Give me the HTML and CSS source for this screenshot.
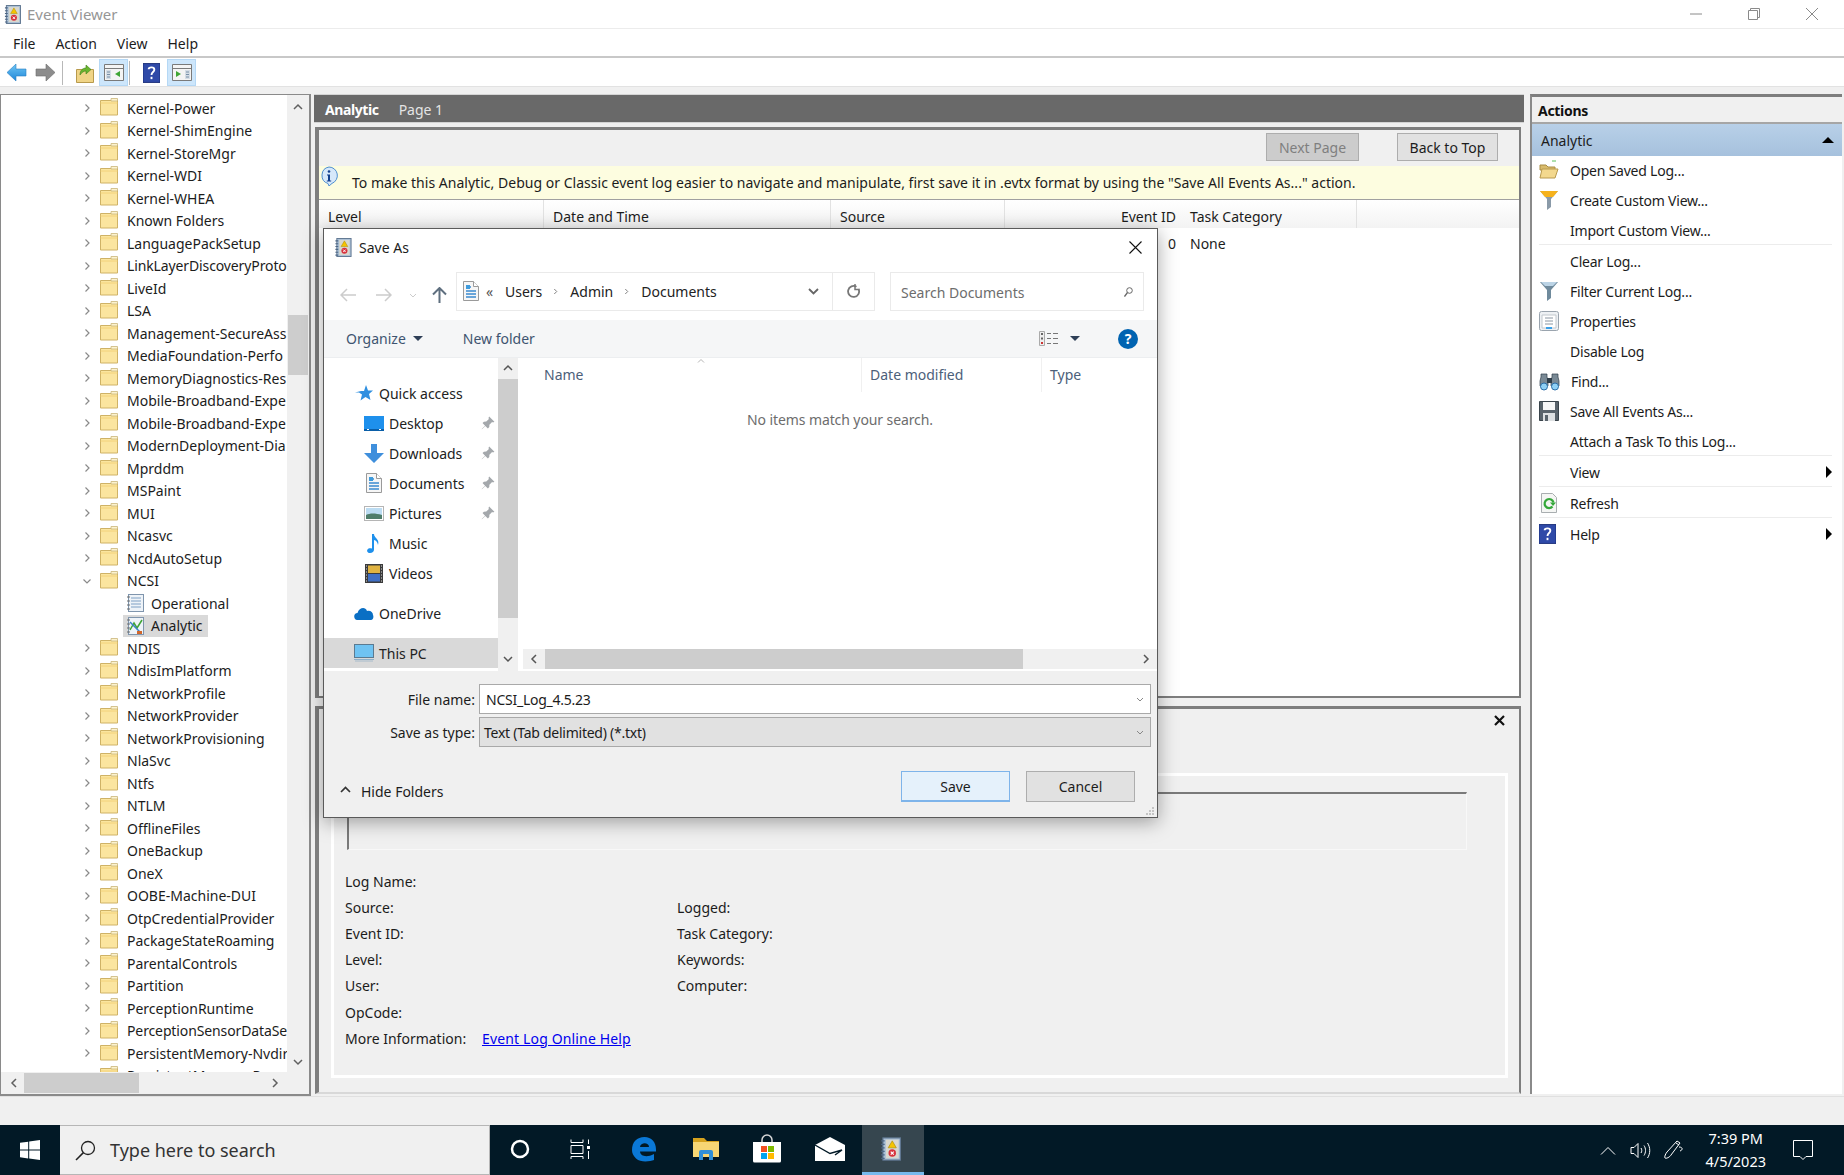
FILE: index.html
```html
<!DOCTYPE html>
<html lang="en">
<head>
    <meta charset="UTF-8">
    <title>Event Viewer</title>
    <link rel="stylesheet" href="styles.css">
</head>
<body>
<svg class="icon-defs" xmlns="http://www.w3.org/2000/svg">
    <symbol id="folder" viewBox="0 0 18 18">
        <path d="M.5 2.500h17v14.500H.5z" fill="#fbe59f" stroke="#cfb266"/>
        <path d="M.5 5h17" stroke="#f3d27a"/>
        <path d="M11 3V.5h6.500V3z" fill="#fdf3cf" stroke="#c9b57a" stroke-width=".8"/>
    </symbol>
    <symbol id="evlog" viewBox="0 0 18 20">
        <rect x="2.500" y=".5" width="15" height="19" fill="#a9bfd6" stroke="#5f7690"/>
        <rect x="5" y="2" width="11" height="16" fill="#d8d8cf"/>
        <path d="M1 3h3M1 6h3M1 9h3M1 12h3M1 15h3M1 18h3" stroke="#4d6785" stroke-width="1.200"/>
        <path d="M10.500 3l3.500 6H7z" fill="#f5c400" stroke="#a58400" stroke-width=".5"/>
        <circle cx="10.500" cy="13.500" r="3.200" fill="#d7313c"/>
        <path d="M9.200 12.200l2.600 2.600M11.800 12.200l-2.600 2.600" stroke="#fff"/>
    </symbol>
    <symbol id="doc" viewBox="0 0 16 20">
        <path d="M.5.500h10l5 5v14H.5z" fill="#f6f6f6" stroke="#9a9a9a"/>
        <path d="M10.500.500v5h5" fill="#fff" stroke="#9a9a9a"/>
        <path d="M3 6h5M3 10h10M3 13h10M3 16h10" stroke="#3b8bd0" stroke-width="1.400"/>
        <path d="M3 4h4v4H3z" fill="#3e9bdc"/>
    </symbol>
    <symbol id="pin" viewBox="0 0 12 12">
        <path d="M7 .5l4.500 4.500-1.200.6-.8-.4-2.300 2.300-.1 2L5.900 10.700 3.700 8.500.8 11.400.6 11.200 3.500 8.300 1.300 6.100 2.500 4.900l2-.1 2.300-2.300-.4-.8z" fill="#a4a8ac"/>
    </symbol>
    <symbol id="helpbook" viewBox="0 0 18 20">
        <rect width="18" height="20" fill="#2f4aa8"/>
        <path d="M0 0h18v20H0z" fill="none" stroke="#1b2e78"/>
        <path d="M6 6c0-2.500 6-3 6 .5 0 2.500-3 2.500-3 5.500" fill="none" stroke="#fff" stroke-width="2"/>
        <rect x="8" y="14" width="2" height="2.500" fill="#fff"/>
    </symbol>
    <symbol id="chev" viewBox="0 0 8 10">
        <path d="M2.500 1.500l3.500 3.500-3.500 3.500" fill="none" stroke="#8a8a8a" stroke-width="1.200"/>
    </symbol>
    <linearGradient id="arrowblue" x1="0" x2="0" y1="0" y2="1">
        <stop offset="0" stop-color="#6fc6f5"/>
        <stop offset="1" stop-color="#1e86d8"/>
    </linearGradient>
</svg>

<div class="app">
    <div class="titlebar">
        <svg class="title-icon"><use href="#evlog"/></svg>
        <span class="title-text">Event Viewer</span>
        <div class="win-buttons">
            <svg width="12" height="12" viewBox="0 0 12 12"><path d="M0 6h12" stroke="#8a8a8a"/></svg>
            <svg width="12" height="12" viewBox="0 0 12 12"><path d="M.5 2.500h9v9h-9zM2.500 2.500v-2h9v9h-2" fill="none" stroke="#8a8a8a"/></svg>
            <svg width="12" height="12" viewBox="0 0 12 12"><path d="M0 0l12 12M12 0L0 12" stroke="#8a8a8a"/></svg>
        </div>
    </div>
    <div class="menubar">
        <span>File</span>
        <span>Action</span>
        <span>View</span>
        <span>Help</span>
    </div>
    <div class="toolbar">
        <svg class="tool" width="21" height="19" viewBox="0 0 21 19"><path d="M1 9.500L10 1v5h10v7H10v5z" fill="url(#arrowblue)" stroke="#2a7fc4" stroke-width=".6"/></svg>
        <svg class="tool tool-fwd" width="21" height="19" viewBox="0 0 21 19"><path d="M20 9.500L11 1v5H1v7h10v5z" fill="#8c8c8c" stroke="#6c6c6c" stroke-width=".6"/></svg>
        <i class="tool-sep"></i>
        <svg class="tool tool-up" width="18" height="20" viewBox="0 0 18 20"><path d="M.5 6.500h17v13H.5z" fill="#f0d486" stroke="#b89a4c"/><path d="M4 12c0-5 3-7 6-7V2l5 4.500L10 11V8c-2 0-4 1-6 4z" fill="#69b52f" stroke="#3f7f17" stroke-width=".6"/></svg>
        <div class="tool-on">
            <svg width="20" height="17" viewBox="0 0 20 17"><path d="M.5.500h19v16H.5z" fill="#f4f4f4" stroke="#7a7a7a"/><path d="M.5 4.500h19" stroke="#7a7a7a"/><path d="M2 6h5v9H2z" fill="#d5dde5"/><path d="M3 8h3M3 10.500h3M3 13h3" stroke="#7890a8"/><path d="M16 7v6l-5-3z" fill="#3fa535"/></svg>
        </div>
        <i class="tool-sep tool-sep-b"></i>
        <svg class="tool tool-help" width="17" height="20"><use href="#helpbook"/></svg>
        <div class="tool-on tool-on-b">
            <svg width="20" height="17" viewBox="0 0 20 17"><path d="M.5.500h19v16H.5z" fill="#f4f4f4" stroke="#7a7a7a"/><path d="M.5 4.500h19" stroke="#7a7a7a"/><path d="M13 6h5v9h-5z" fill="#d5dde5"/><path d="M14 8h3M14 10.500h3M14 13h3" stroke="#7890a8"/><path d="M4 7v6l5-3z" fill="#3fa535"/></svg>
        </div>
    </div>

    <div class="main">
        <div class="tree-pane">
            <div class="tree-top">
                <div class="tree-list">
                    <div class="tree-row"><svg class="exp"><use href="#chev"/></svg><svg class="fold"><use href="#folder"/></svg><span>Kernel-Power</span></div>
                    <div class="tree-row"><svg class="exp"><use href="#chev"/></svg><svg class="fold"><use href="#folder"/></svg><span>Kernel-ShimEngine</span></div>
                    <div class="tree-row"><svg class="exp"><use href="#chev"/></svg><svg class="fold"><use href="#folder"/></svg><span>Kernel-StoreMgr</span></div>
                    <div class="tree-row"><svg class="exp"><use href="#chev"/></svg><svg class="fold"><use href="#folder"/></svg><span>Kernel-WDI</span></div>
                    <div class="tree-row"><svg class="exp"><use href="#chev"/></svg><svg class="fold"><use href="#folder"/></svg><span>Kernel-WHEA</span></div>
                    <div class="tree-row"><svg class="exp"><use href="#chev"/></svg><svg class="fold"><use href="#folder"/></svg><span>Known Folders</span></div>
                    <div class="tree-row"><svg class="exp"><use href="#chev"/></svg><svg class="fold"><use href="#folder"/></svg><span>LanguagePackSetup</span></div>
                    <div class="tree-row"><svg class="exp"><use href="#chev"/></svg><svg class="fold"><use href="#folder"/></svg><span class="tight">LinkLayerDiscoveryProto</span></div>
                    <div class="tree-row"><svg class="exp"><use href="#chev"/></svg><svg class="fold"><use href="#folder"/></svg><span>LiveId</span></div>
                    <div class="tree-row"><svg class="exp"><use href="#chev"/></svg><svg class="fold"><use href="#folder"/></svg><span>LSA</span></div>
                    <div class="tree-row"><svg class="exp"><use href="#chev"/></svg><svg class="fold"><use href="#folder"/></svg><span>Management-SecureAss</span></div>
                    <div class="tree-row"><svg class="exp"><use href="#chev"/></svg><svg class="fold"><use href="#folder"/></svg><span>MediaFoundation-Perfo</span></div>
                    <div class="tree-row"><svg class="exp"><use href="#chev"/></svg><svg class="fold"><use href="#folder"/></svg><span>MemoryDiagnostics-Res</span></div>
                    <div class="tree-row"><svg class="exp"><use href="#chev"/></svg><svg class="fold"><use href="#folder"/></svg><span>Mobile-Broadband-Expe</span></div>
                    <div class="tree-row"><svg class="exp"><use href="#chev"/></svg><svg class="fold"><use href="#folder"/></svg><span>Mobile-Broadband-Expe</span></div>
                    <div class="tree-row"><svg class="exp"><use href="#chev"/></svg><svg class="fold"><use href="#folder"/></svg><span>ModernDeployment-Dia</span></div>
                    <div class="tree-row"><svg class="exp"><use href="#chev"/></svg><svg class="fold"><use href="#folder"/></svg><span>Mprddm</span></div>
                    <div class="tree-row"><svg class="exp"><use href="#chev"/></svg><svg class="fold"><use href="#folder"/></svg><span>MSPaint</span></div>
                    <div class="tree-row"><svg class="exp"><use href="#chev"/></svg><svg class="fold"><use href="#folder"/></svg><span>MUI</span></div>
                    <div class="tree-row"><svg class="exp"><use href="#chev"/></svg><svg class="fold"><use href="#folder"/></svg><span>Ncasvc</span></div>
                    <div class="tree-row"><svg class="exp"><use href="#chev"/></svg><svg class="fold"><use href="#folder"/></svg><span>NcdAutoSetup</span></div>
                    <div class="tree-row"><svg class="exp open"><use href="#chev"/></svg><svg class="fold"><use href="#folder"/></svg><span>NCSI</span></div>
                    <div class="tree-row child">
                        <svg class="log-icon" viewBox="0 0 18 18"><rect x="2.500" y=".5" width="15" height="17" fill="#eef3f8" stroke="#7f95ad"/><path d="M5 4h10M5 7h10M5 10h10M5 13h10" stroke="#7fa0c4"/><path d="M1 3h3M1 7h3M1 11h3M1 15h3" stroke="#6a6a6a"/></svg>
                        <span>Operational</span>
                    </div>
                    <div class="tree-row child selected">
                        <svg class="log-icon" viewBox="0 0 18 18"><rect x="2.500" y=".5" width="15" height="17" fill="#eef3f8" stroke="#7f95ad"/><path d="M4 13l4-7 3 5 5-8" fill="none" stroke="#3fa535" stroke-width="1.500"/><path d="M4 5l10 10" stroke="#3c82c8" stroke-width="1.500"/><path d="M11 14h5v3h-5z" fill="#d2662a"/><path d="M1 3h3M1 7h3M1 11h3M1 15h3" stroke="#6a6a6a"/></svg>
                        <span>Analytic</span>
                    </div>
                    <div class="tree-row"><svg class="exp"><use href="#chev"/></svg><svg class="fold"><use href="#folder"/></svg><span>NDIS</span></div>
                    <div class="tree-row"><svg class="exp"><use href="#chev"/></svg><svg class="fold"><use href="#folder"/></svg><span>NdisImPlatform</span></div>
                    <div class="tree-row"><svg class="exp"><use href="#chev"/></svg><svg class="fold"><use href="#folder"/></svg><span>NetworkProfile</span></div>
                    <div class="tree-row"><svg class="exp"><use href="#chev"/></svg><svg class="fold"><use href="#folder"/></svg><span>NetworkProvider</span></div>
                    <div class="tree-row"><svg class="exp"><use href="#chev"/></svg><svg class="fold"><use href="#folder"/></svg><span>NetworkProvisioning</span></div>
                    <div class="tree-row"><svg class="exp"><use href="#chev"/></svg><svg class="fold"><use href="#folder"/></svg><span>NlaSvc</span></div>
                    <div class="tree-row"><svg class="exp"><use href="#chev"/></svg><svg class="fold"><use href="#folder"/></svg><span>Ntfs</span></div>
                    <div class="tree-row"><svg class="exp"><use href="#chev"/></svg><svg class="fold"><use href="#folder"/></svg><span>NTLM</span></div>
                    <div class="tree-row"><svg class="exp"><use href="#chev"/></svg><svg class="fold"><use href="#folder"/></svg><span>OfflineFiles</span></div>
                    <div class="tree-row"><svg class="exp"><use href="#chev"/></svg><svg class="fold"><use href="#folder"/></svg><span>OneBackup</span></div>
                    <div class="tree-row"><svg class="exp"><use href="#chev"/></svg><svg class="fold"><use href="#folder"/></svg><span>OneX</span></div>
                    <div class="tree-row"><svg class="exp"><use href="#chev"/></svg><svg class="fold"><use href="#folder"/></svg><span>OOBE-Machine-DUI</span></div>
                    <div class="tree-row"><svg class="exp"><use href="#chev"/></svg><svg class="fold"><use href="#folder"/></svg><span>OtpCredentialProvider</span></div>
                    <div class="tree-row"><svg class="exp"><use href="#chev"/></svg><svg class="fold"><use href="#folder"/></svg><span>PackageStateRoaming</span></div>
                    <div class="tree-row"><svg class="exp"><use href="#chev"/></svg><svg class="fold"><use href="#folder"/></svg><span>ParentalControls</span></div>
                    <div class="tree-row"><svg class="exp"><use href="#chev"/></svg><svg class="fold"><use href="#folder"/></svg><span>Partition</span></div>
                    <div class="tree-row"><svg class="exp"><use href="#chev"/></svg><svg class="fold"><use href="#folder"/></svg><span>PerceptionRuntime</span></div>
                    <div class="tree-row"><svg class="exp"><use href="#chev"/></svg><svg class="fold"><use href="#folder"/></svg><span class="tight">PerceptionSensorDataSe</span></div>
                    <div class="tree-row"><svg class="exp"><use href="#chev"/></svg><svg class="fold"><use href="#folder"/></svg><span>PersistentMemory-Nvdir</span></div>
                    <div class="tree-row"><svg class="exp"><use href="#chev"/></svg><svg class="fold"><use href="#folder"/></svg><span>PersistentMemory-P</span></div>
                </div>
                <div class="tree-vscroll">
                    <svg width="12" height="8" viewBox="0 0 12 8"><path d="M2 6l4-4 4 4" fill="none" stroke="#606060" stroke-width="1.500"/></svg>
                    <div class="tree-vthumb"></div>
                    <svg width="12" height="8" viewBox="0 0 12 8"><path d="M2 2l4 4 4-4" fill="none" stroke="#606060" stroke-width="1.500"/></svg>
                </div>
            </div>
            <div class="tree-hscroll">
                <svg width="8" height="12" viewBox="0 0 8 12"><path d="M6 2L2 6l4 4" fill="none" stroke="#606060" stroke-width="1.500"/></svg>
                <div class="tree-hthumb"></div>
                <svg width="8" height="12" viewBox="0 0 8 12"><path d="M2 2l4 4-4 4" fill="none" stroke="#606060" stroke-width="1.500"/></svg>
            </div>
        </div>

        <div class="center">
            <div class="center-head"><b>Analytic</b><span>Page 1</span></div>
            <div class="events">
                <div class="events-bar">
                    <button class="btn-disabled">Next Page</button>
                    <button class="btn-top">Back to Top</button>
                </div>
                <div class="info-bar">
                    <svg class="info-icon" width="20" height="20" viewBox="0 0 20 20"><path d="M10 1a8.500 8.500 0 0 1 3 16.400L10 20l-1-2.500A8.500 8.500 0 0 1 10 1z" fill="#d6e8fa" stroke="#4f8fd0"/><circle cx="10" cy="5.500" r="1.300" fill="#123f8c"/><path d="M8 8.500h3v6h1.200v1H7.800v-1H9V9.500H8z" fill="#123f8c"/></svg>
                    <span>To make this Analytic, Debug or Classic event log easier to navigate and manipulate, first save it in .evtx format by using the "Save All Events As..." action.</span>
                </div>
                <div class="events-table">
                    <div class="events-row events-head">
                        <span>Level</span><span>Date and Time</span><span>Source</span><span class="num">Event ID</span><span>Task Category</span>
                    </div>
                    <div class="events-row">
                        <span></span><span></span><span></span><span class="num">0</span><span>None</span>
                    </div>
                </div>
            </div>
            <div class="details">
                <div class="details-bar">
                    <svg width="11" height="11" viewBox="0 0 11 11"><path d="M1 1l9 9M10 1l-9 9" stroke="#111" stroke-width="2.200"/></svg>
                </div>
                <div class="details-tab">
                    <div class="message-box"></div>
                    <div class="fields">
                        <span>Log Name:</span><span></span><span></span><span></span>
                        <span>Source:</span><span></span><span>Logged:</span><span></span>
                        <span>Event ID:</span><span></span><span>Task Category:</span><span></span>
                        <span>Level:</span><span></span><span>Keywords:</span><span></span>
                        <span>User:</span><span></span><span>Computer:</span><span></span>
                        <span>OpCode:</span><span></span><span></span><span></span>
                        <span>More Information:</span><a href="#" class="more-link">Event Log Online Help</a><span></span><span></span>
                    </div>
                </div>
            </div>
        </div>

        <div class="actions">
            <div class="actions-head">Actions</div>
            <div class="actions-group"><span>Analytic</span><i class="tri-up"></i></div>
            <div class="actions-list">
                <div class="action">
                    <svg width="20" height="20" viewBox="0 0 20 20"><path d="M13 1h4" stroke="#5bc05b"/><path d="M1 5h6l2 2h7v3H1z" fill="#d9bb6b" stroke="#a98c45"/><path d="M1 18l2-9h16l-3 9z" fill="#f3d88e" stroke="#b99a4e"/></svg>
                    <span>Open Saved Log...</span>
                </div>
                <div class="action">
                    <svg width="20" height="20" viewBox="0 0 20 20"><path d="M1 1h18l-7 8v8l-4 3V9z" fill="#8a9aa8"/><path d="M1 1h18l-5 6H6z" fill="#f6b21c"/></svg>
                    <span>Create Custom View...</span>
                </div>
                <div class="action"><i class="no-icon"></i><span>Import Custom View...</span></div>
                <div class="action-sep"></div>
                <div class="action"><i class="no-icon"></i><span>Clear Log...</span></div>
                <div class="action">
                    <svg width="20" height="20" viewBox="0 0 20 20"><path d="M1 1h18l-7 8v8l-4 3V9z" fill="#6f8a9c"/><path d="M2 1h16l-4 4H6z" fill="#bcd4e6"/></svg>
                    <span>Filter Current Log...</span>
                </div>
                <div class="action">
                    <svg width="20" height="20" viewBox="0 0 20 20"><rect x=".5" y=".5" width="19" height="19" rx="2" fill="#eef1f4" stroke="#9aa4ae"/><path d="M3 4h14v13H3z" fill="#fff" stroke="#c2c8ce"/><path d="M6 7h8M6 10h8M6 13h8" stroke="#8a96a2"/><path d="M7 17h6" stroke="#3aa0e8" stroke-width="2"/></svg>
                    <span>Properties</span>
                </div>
                <div class="action"><i class="no-icon"></i><span>Disable Log</span></div>
                <div class="action">
                    <svg width="21" height="20" viewBox="0 0 21 20"><path d="M2 3h6v3l1 4v5H1v-5l1-4zM13 3h6v3l1 4v5h-8v-5l1-4z" fill="#7a8a96" stroke="#2f3e4a" stroke-width=".7"/><path d="M8 7h5v5H8z" fill="#2f3e4a"/><circle cx="5" cy="15.500" r="3.500" fill="#8fd0f5" stroke="#2a6ea8"/><circle cx="16" cy="15.500" r="3.500" fill="#8fd0f5" stroke="#2a6ea8"/></svg>
                    <span>Find...</span>
                </div>
                <div class="action">
                    <svg width="20" height="20" viewBox="0 0 20 20"><path d="M.5.500h19v19H.5z" fill="#59636b" stroke="#3a444b"/><path d="M4 1h12v8H4z" fill="#f7f7f7"/><path d="M4 12h12v8H4z" fill="#dde0e2"/><path d="M6 14h3v6H6z" fill="#59636b"/></svg>
                    <span>Save All Events As...</span>
                </div>
                <div class="action"><i class="no-icon"></i><span>Attach a Task To this Log...</span></div>
                <div class="action-sep"></div>
                <div class="action"><i class="no-icon"></i><span>View</span><i class="tri-right"></i></div>
                <div class="action-sep"></div>
                <div class="action">
                    <svg width="20" height="20" viewBox="0 0 20 20"><path d="M2.500.500h11l4 4v15h-15z" fill="#f5f6f4" stroke="#a9aeb0"/><path d="M14.500 9.500a4.500 4.500 0 1 0-1 4" fill="none" stroke="#35a83a" stroke-width="2.200"/><path d="M11 9.500h6l-3 3.500z" fill="#35a83a"/></svg>
                    <span>Refresh</span>
                </div>
                <div class="action-sep"></div>
                <div class="action">
                    <svg width="17" height="20"><use href="#helpbook"/></svg>
                    <span class="help-label">Help</span><i class="tri-right"></i>
                </div>
            </div>
        </div>
    </div>

    <div class="statusbar"><i></i><i></i><i></i></div>

    <div class="taskbar">
        <div class="start">
            <svg width="20" height="20" viewBox="0 0 20 20"><path d="M0 2.800l8.200-1.100v7.900H0zM9.200 1.500L20 0v9.600H9.200zM0 10.600h8.200v7.800L0 17.200zM9.200 10.600H20V20L9.200 18.500z" fill="#fff"/></svg>
        </div>
        <div class="search">
            <svg width="21" height="21" viewBox="0 0 21 21"><circle cx="13" cy="8" r="6.500" fill="none" stroke="#222" stroke-width="1.300"/><path d="M8.400 12.600L1 20" stroke="#222" stroke-width="1.500"/></svg>
            <span>Type here to search</span>
        </div>
        <div class="task-icons">
            <div class="task-btn"><svg width="20" height="20" viewBox="0 0 20 20"><circle cx="10" cy="10" r="8" fill="none" stroke="#fff" stroke-width="2.500"/></svg></div>
            <div class="task-btn"><svg class="task-view" width="20" height="20" viewBox="0 0 20 20"><path d="M1 3.500h12M1 .5v3M13 .5v3M1 6.500h12v8H1zM1 17.500h12M1 17.500v2.500M13 17.500v2.500M18.500 .5v4.500M18.500 12v8" fill="none" stroke="#fff"/><rect x="17" y="7" width="3" height="3" fill="#fff"/></svg></div>
            <div class="task-btn"><svg width="26" height="26" viewBox="0 0 26 26"><path d="M1 14C1 6 6 1 13.500 1 20.500 1 25 6 25 13.500v2H9c.3 4.500 6.500 6.500 14 2.500v6c-4 1.500-13 3-18-1.500C2 19.500 1 17 1 14zm8-3h9c0-5-8.500-5-9 0z" fill="#0a78d7"/></svg></div>
            <div class="task-btn"><svg width="28" height="24" viewBox="0 0 28 24"><path d="M1 1h11l3 3h12v5H1z" fill="#d6a21e"/><path d="M1 5h26v15H1z" fill="#f7d674"/><path d="M7 23v-8a2 2 0 0 1 2-2h10a2 2 0 0 1 2 2v8h-4v-6h-6v6z" fill="#2f8fd8"/></svg></div>
            <div class="task-btn"><svg class="task-store" width="30" height="29" viewBox="0 0 30 29"><path d="M10 8V6a5 5 0 0 1 10 0v2" fill="none" stroke="#d8d8d8" stroke-width="1.500"/><path d="M1 8h28v19a1.500 1.500 0 0 1-1.500 1.500h-25A1.500 1.500 0 0 1 1 27z" fill="#fff"/><rect x="9" y="12" width="6" height="6" fill="#f25022"/><rect x="16" y="12" width="6" height="6" fill="#7fba00"/><rect x="9" y="19" width="6" height="6" fill="#00a4ef"/><rect x="16" y="19" width="6" height="6" fill="#ffb900"/></svg></div>
            <div class="task-btn"><svg width="30" height="24" viewBox="0 0 30 24"><path d="M0 8L15 0l15 8v16H0z" fill="#fff"/><path d="M0 8l15 8.500 12-3.500-7 5" fill="none" stroke="#021926" stroke-width="1.400"/></svg></div>
            <div class="task-btn active"><svg class="task-log" width="21" height="24"><use href="#evlog"/></svg></div>
        </div>
        <div class="tray">
            <svg width="16" height="9" viewBox="0 0 16 9"><path d="M1 8.500l7-7 7 7" fill="none" stroke="#fff"/></svg>
            <svg class="tray-vol" width="21" height="17" viewBox="0 0 21 17"><path d="M1 5.500h3l4-4v14l-4-4H1zM11 6c1 1.500 1 3.500 0 5M14 3.500c2 3 2 7 0 10M17.500 1c3 4.500 3 10.500 0 15" fill="none" stroke="#fff"/></svg>
            <svg class="tray-pen" width="20" height="20" viewBox="0 0 20 20"><path d="M13 1l3 2-9 12c-1 2-5 4-6 3s1-5 2-6zM12 3l3 2" fill="none" stroke="#fff"/><path d="M15 7c4 0 4 3 1 4" fill="none" stroke="#fff"/></svg>
            <div class="clock"><span>7:39 PM</span><span>4/5/2023</span></div>
            <svg class="tray-note" width="20" height="20" viewBox="0 0 20 20"><path d="M.5.500h19v16h-6.500L10 19.500 7 16.500H.5z" fill="none" stroke="#fff"/></svg>
        </div>
    </div>

    <div class="dialog">
        <div class="dlg-title">
            <svg width="18" height="19"><use href="#evlog"/></svg>
            <span>Save As</span>
            <svg class="dlg-close" width="13" height="13" viewBox="0 0 13 13"><path d="M.5.500l12 12M12.500.500l-12 12" stroke="#111" stroke-width="1.100"/></svg>
        </div>
        <div class="dlg-nav">
            <svg width="16" height="14" viewBox="0 0 16 14"><path d="M7 1L1 7l6 6M1 7h15" fill="none" stroke="#ccc" stroke-width="1.500"/></svg>
            <svg class="nav-fwd" width="16" height="14" viewBox="0 0 16 14"><path d="M9 1l6 6-6 6M15 7H0" fill="none" stroke="#ccc" stroke-width="1.500"/></svg>
            <svg class="nav-drop" width="8" height="5" viewBox="0 0 8 5"><path d="M1 1l3 3 3-3" fill="none" stroke="#ccc"/></svg>
            <svg class="nav-up" width="15" height="16" viewBox="0 0 15 16"><path d="M1 7.500l6.500-6.500L14 7.500M7.500 1v15" fill="none" stroke="#5f6f7f" stroke-width="2"/></svg>
            <div class="addr">
                <svg width="16" height="20"><use href="#doc"/></svg>
                <span class="crumb-more">«</span>
                <span class="crumb">Users</span><svg class="crumb-sep" width="5" height="7" viewBox="0 0 8 10"><path d="M2 1l4 4-4 4" fill="none" stroke="#777" stroke-width="1.500"/></svg>
                <span class="crumb">Admin</span><svg class="crumb-sep" width="5" height="7" viewBox="0 0 8 10"><path d="M2 1l4 4-4 4" fill="none" stroke="#777" stroke-width="1.500"/></svg>
                <span class="crumb">Documents</span>
                <svg class="addr-drop" width="11" height="7" viewBox="0 0 11 7"><path d="M1 1l4.500 4.500L10 1" fill="none" stroke="#666" stroke-width="1.800"/></svg>
            </div>
            <div class="refresh">
                <svg width="14" height="15" viewBox="0 0 14 15"><path d="M11.500 5a5.500 5.500 0 1 1-2-2.200" fill="none" stroke="#777" stroke-width="1.800"/><path d="M8 0v5.500h4.500" fill="none" stroke="#777" stroke-width="1.500"/></svg>
            </div>
            <div class="dlg-search">
                <span>Search Documents</span>
                <svg width="9" height="10" viewBox="0 0 9 10"><circle cx="5.500" cy="3.500" r="2.800" fill="none" stroke="#666"/><path d="M3.500 5.500L.5 9.500" stroke="#666" stroke-width="1.300"/></svg>
            </div>
        </div>
        <div class="dlg-cmd">
            <span>Organize</span><i class="caret"></i>
            <span class="cmd-new">New folder</span>
            <svg class="view-icon" width="20" height="15" viewBox="0 0 20 15"><path d="M.5.500h5v14h-5z" fill="#eee" stroke="#aaa"/><path d="M8 2.500h4M14 2.500h5M8 7.500h4M14 7.500h5M8 12.500h4M14 12.500h5" stroke="#777"/><path d="M2 2h2v2H2zM2 6.500h2v2H2z" fill="#666"/><path d="M2 11h2v2H2z" fill="#c33"/></svg>
            <i class="caret view-caret"></i>
            <div class="cmd-help">?</div>
        </div>
        <div class="dlg-body">
            <div class="dlg-side">
                <div class="side-list">
                    <div class="side-item top">
                        <svg width="18" height="16" viewBox="0 0 18 16"><path d="M11 0l2 5.500h5L14 9l1.500 6L10.500 12 5.500 15.500 7 9.500 4 7.500h-4l4-1 2-.5h3z" fill="#2f8fe0"/></svg>
                        <span>Quick access</span>
                    </div>
                    <div class="side-item">
                        <svg width="20" height="15" viewBox="0 0 20 15"><rect width="20" height="15" fill="#1e90ec"/><path d="M0 13h20v2H0z" fill="#0a5ea8"/><path d="M3 13.500h2M15 13.500h2" stroke="#fff"/></svg>
                        <span>Desktop</span><svg class="pin"><use href="#pin"/></svg>
                    </div>
                    <div class="side-item">
                        <svg width="20" height="19" viewBox="0 0 20 19"><path d="M7 0h6v9h7L10 19 0 9h7z" fill="#3f8fdc"/></svg>
                        <span>Downloads</span><svg class="pin"><use href="#pin"/></svg>
                    </div>
                    <div class="side-item">
                        <svg width="20" height="20"><use href="#doc"/></svg>
                        <span>Documents</span><svg class="pin"><use href="#pin"/></svg>
                    </div>
                    <div class="side-item">
                        <svg width="20" height="15" viewBox="0 0 20 15"><rect x=".5" y=".5" width="19" height="14" fill="#fff" stroke="#b5b5b5"/><rect x="2" y="2" width="16" height="11" fill="#bcdcf2"/><path d="M2 9c4-2 9-2 16 0v4H2z" fill="#4f7d6a"/></svg>
                        <span>Pictures</span><svg class="pin"><use href="#pin"/></svg>
                    </div>
                    <div class="side-item">
                        <svg width="20" height="19" viewBox="0 0 20 19"><path d="M8 0h2c0 4 6 5 4 11-.5-3-2-4.500-4-5v9.500c0 2-1.500 3.500-4 3.500s-3.500-2-2.500-3.500S6 14 8 14.500z" fill="#1e90ec"/></svg>
                        <span>Music</span>
                    </div>
                    <div class="side-item">
                        <svg width="20" height="19" viewBox="0 0 20 19"><rect x="1" width="18" height="19" fill="#3b3b3b"/><rect x="4" y="1.500" width="12" height="7.500" fill="#e0b341"/><rect x="4" y="10" width="12" height="7.500" fill="#3f6fc4"/><path d="M2 2h1M2 5h1M2 8h1M2 11h1M2 14h1M2 17h1M17 2h1M17 5h1M17 8h1M17 11h1M17 14h1M17 17h1" stroke="#ddd"/></svg>
                        <span>Videos</span>
                    </div>
                    <div class="side-item top onedrive">
                        <svg width="20" height="13" viewBox="0 0 20 13"><path d="M4 13a3.500 3.500 0 0 1-.5-7C5 1 11-1 13 4c3-1 6 1 6 4 1 2 0 5-2 5z" fill="#0a6fc4"/></svg>
                        <span>OneDrive</span>
                    </div>
                    <div class="side-item top this-pc">
                        <svg width="20" height="18" viewBox="0 0 20 18"><rect x=".5" y=".5" width="19" height="13" fill="#6fc3f2" stroke="#5b7a90"/><path d="M0 15h20v1H0z" fill="#8fb0c8"/><path d="M1 17h18" stroke="#a8bccc"/></svg>
                        <span>This PC</span>
                    </div>
                </div>
                <div class="side-scroll">
                    <svg width="10" height="7" viewBox="0 0 10 7"><path d="M1 6l4-4 4 4" fill="none" stroke="#555" stroke-width="1.500"/></svg>
                    <div class="side-thumb"></div>
                    <svg width="10" height="7" viewBox="0 0 10 7"><path d="M1 1l4 4 4-4" fill="none" stroke="#555" stroke-width="1.500"/></svg>
                </div>
            </div>
            <div class="dlg-files">
                <div class="files-head">
                    <span class="col-name">Name</span><span class="col-date">Date modified</span><span class="col-type">Type</span>
                    <svg class="sort-mark" width="8" height="4" viewBox="0 0 8 4"><path d="M1 3.500l3-3 3 3" fill="none" stroke="#b5b5b5"/></svg>
                </div>
                <div class="files-empty">No items match your search.</div>
                <div class="files-scroll">
                    <svg width="7" height="10" viewBox="0 0 7 10"><path d="M6 1L2 5l4 4" fill="none" stroke="#555" stroke-width="1.500"/></svg>
                    <div class="files-thumb"></div>
                    <svg width="7" height="10" viewBox="0 0 7 10"><path d="M1 1l4 4-4 4" fill="none" stroke="#555" stroke-width="1.500"/></svg>
                </div>
            </div>
        </div>
        <div class="dlg-form">
            <div class="form-row">
                <label>File name:</label>
                <div class="combo"><span>NCSI_Log_4.5.23</span><svg width="8" height="5" viewBox="0 0 8 5"><path d="M1 1l3 3 3-3" fill="none" stroke="#888"/></svg></div>
            </div>
            <div class="form-row">
                <label>Save as type:</label>
                <div class="combo combo-grey"><span>Text (Tab delimited) (*.txt)</span><svg width="8" height="5" viewBox="0 0 8 5"><path d="M1 1l3 3 3-3" fill="none" stroke="#888"/></svg></div>
            </div>
            <div class="dlg-foot">
                <svg class="hide-chev" width="11" height="7" viewBox="0 0 11 7"><path d="M1 6l4.500-4.500L10 6" fill="none" stroke="#333" stroke-width="1.700"/></svg>
                <span class="hide-folders">Hide Folders</span>
                <button class="btn-save">Save</button>
                <button class="btn-cancel">Cancel</button>
            </div>
            <svg class="grip" width="8" height="8" viewBox="0 0 8 8"><path d="M6 0h2v2H6zM3 3h2v2H3zM6 3h2v2H6zM0 6h2v2H0zM3 6h2v2H3zM6 6h2v2H6z" fill="#c4c4c4"/></svg>
        </div>
    </div>
</div>
</body>
</html>
```

FILE: styles.css
```css
* {
    box-sizing: border-box;
}

body {
    margin: 0;
    font-family: "Noto Sans", "Open Sans", sans-serif;
    font-size: 14px;
    color: #1c1c1c;
    background: #f0f0f0;
    overflow: hidden;
}

.icon-defs {
    display: block;
    width: 0;
    height: 0;
}

.app {
    position: relative;
    width: 1844px;
    height: 1175px;
    display: flex;
    flex-direction: column;
    overflow: hidden;
}

/* window chrome */
.titlebar {
    height: 29px;
    flex-shrink: 0;
    background: #fff;
    display: flex;
    align-items: center;
    padding-left: 4px;
    border-bottom: 1px solid #ececec;
}

.title-icon {
    width: 17px;
    height: 19px;
}

.title-text {
    margin-left: 6px;
    color: #969696;
    font-size: 15px;
}

.win-buttons {
    margin-left: auto;
    display: flex;
    gap: 46px;
    padding-right: 26px;
}

.menubar {
    height: 29px;
    flex-shrink: 0;
    background: #fff;
    display: flex;
    align-items: center;
    gap: 20px;
    padding: 1px 0 0 13px;
    border-bottom: 2px solid #c8c8c8;
}

.toolbar {
    height: 29px;
    flex-shrink: 0;
    background: #fff;
    display: flex;
    align-items: center;
    padding: 1px 0 0 6px;
    border-bottom: 1px solid #e2e2e2;
}

.tool-fwd {
    margin-left: 8px;
}

.tool-sep {
    width: 1px;
    height: 24px;
    background: #b8b8b8;
    margin-left: 6px;
}

.tool-up {
    margin-left: 13px;
}

.tool-on {
    width: 29px;
    height: 27px;
    margin-left: 5px;
    background: #cde6fb;
    border: 1px solid #b5d8f5;
    display: flex;
    align-items: center;
    justify-content: center;
}

.tool-sep-b {
    margin-left: 1px;
}

.tool-help {
    margin-left: 13px;
}

.tool-on-b {
    margin-left: 7px;
}

.main {
    height: 1009px;
    flex-shrink: 0;
    padding-top: 7px;
    display: flex;
    background: #f0f0f0;
}

/* tree on the left */
.tree-pane {
    width: 311px;
    flex-shrink: 0;
    background: #f0f0f0;
    border: 1px solid #8a8a8a;
    border-width: 1px 2px 2px 1px;
    display: flex;
    flex-direction: column;
}

.tree-top {
    flex: 1;
    display: flex;
    min-height: 0;
}

.tree-list {
    width: 286px;
    padding-top: 2px;
    background: #fff;
    overflow: hidden;
}

.tree-row {
    height: 22.5px;
    display: flex;
    align-items: center;
    white-space: nowrap;
}

.exp {
    width: 8px;
    height: 10px;
    margin-left: 82px;
    flex-shrink: 0;
}

.exp.open {
    transform: rotate(90deg);
}

.fold {
    width: 18px;
    height: 18px;
    margin: -2px 0 0 9px;
    flex-shrink: 0;
}

.tree-row span {
    margin-left: 9px;
}

.tree-row span.tight {
    letter-spacing: -0.12px;
}

.tree-row.child {
    padding-left: 125px;
}

.log-icon {
    width: 18px;
    height: 18px;
    flex-shrink: 0;
}

.tree-row.child span {
    margin-left: 7px;
}

.tree-row.selected {
    background: linear-gradient(#d9d9d9, #d9d9d9) 122px 0 / 85px 100% no-repeat;
}

.tree-vscroll {
    width: 22px;
    background: #f0f0f0;
    display: flex;
    flex-direction: column;
    align-items: center;
    padding-top: 8px;
}

.tree-vthumb {
    width: 20px;
    height: 60px;
    margin-top: 204px;
    background: #cdcdcd;
}

.tree-vscroll svg:last-child {
    margin-top: auto;
    margin-bottom: 6px;
}

.tree-hscroll {
    height: 22px;
    flex-shrink: 0;
    display: flex;
    align-items: center;
    padding: 0 6px 0 9px;
}

.tree-hthumb {
    width: 115px;
    height: 20px;
    margin-left: 6px;
    background: #cdcdcd;
}

.tree-hscroll svg:last-child {
    margin-left: 132px;
}

/* middle column */
.center {
    width: 1210px;
    margin-left: 3px;
    flex-shrink: 0;
    display: flex;
    flex-direction: column;
}

.center-head {
    height: 29px;
    flex-shrink: 0;
    background: #696969;
    border: 1px solid #d4d4d4;
    border-width: 1px 0;
    color: #e4e4e4;
    display: flex;
    align-items: center;
    padding: 2px 0 0 11px;
    gap: 20px;
}

.center-head b {
    color: #fff;
    letter-spacing: -0.4px;
}

.events {
    height: 571px;
    flex-shrink: 0;
    margin: 4px 3px 0 1px;
    border: 2px solid #7e7e7e;
    border-top-width: 3px;
    border-left-width: 4px;
    background: #fff;
    display: flex;
    flex-direction: column;
}

.events-bar {
    height: 36px;
    flex-shrink: 0;
    background: #f0f0f0;
    display: flex;
    justify-content: flex-end;
    align-items: flex-start;
    padding: 3px 21px 0 0;
}

.events-bar button {
    height: 28px;
    font: inherit;
    border: 1px solid #adadad;
}

.btn-disabled {
    width: 93px;
    background: #cccccc;
    color: #7f7f7f;
    margin-right: 38px;
}

.btn-top {
    width: 101px;
    background: #e1e1e1;
    color: #1c1c1c;
}

.info-bar {
    height: 34px;
    flex-shrink: 0;
    background: #fdfde0;
    border-bottom: 1px solid #a0a0a0;
    display: flex;
    align-items: center;
}

.info-icon {
    margin-top: -14px;
    flex-shrink: 0;
}

.info-bar span {
    margin-left: 13px;
    white-space: nowrap;
    letter-spacing: 0.02px;
}

.events-row {
    display: grid;
    grid-template-columns: 225px 287px 174px 180px 1fr;
    height: 28px;
    align-items: center;
}

.events-row span {
    padding-left: 9px;
}

.events-row span:last-child {
    padding-left: 5px;
}

.events-row .num {
    text-align: right;
    padding-right: 9px;
    padding-left: 0;
}

.events-table .events-row:last-child {
    margin-top: 1px;
}

.events-head {
    background: linear-gradient(#ffffff, #f3f3f3);
}

.events-head span {
    height: 100%;
    display: flex;
    align-items: center;
    padding-top: 5px;
    border-right: 1px solid #e2e2e2;
}

.events-head .num {
    justify-content: flex-end;
    border-right: 0;
}

.events-head span:last-child {
    width: 172px;
}

/* lower details panel */
.details {
    flex: 1;
    min-height: 0;
    margin: 8px 3px 2px 1px;
    border: 2px solid #7e7e7e;
    border-top-width: 3px;
    border-left-width: 4px;
    border-bottom-color: #d8d8d8;
    display: flex;
    flex-direction: column;
    background: #f0f0f0;
}

.details-bar {
    height: 28px;
    flex-shrink: 0;
    display: flex;
    justify-content: flex-end;
    align-items: center;
    padding: 0 14px 6px 0;
    background: #f0f0f0;
}

.details-tab {
    flex: 1;
    margin: 36px 11px 14px 12px;
    border: 3px solid #fff;
    padding: 16px 38px 0 13px;
    display: flex;
    flex-direction: column;
    min-height: 0;
}

.message-box {
    height: 58px;
    flex-shrink: 0;
    border: 1px solid #f8f8f8;
    border-left: 2px solid #7a7a7a;
    border-top: 2px solid #7a7a7a;
}

.fields {
    margin: 18px 0 0 -2px;
    display: grid;
    grid-template-columns: 137px 195px auto 1fr;
    grid-auto-rows: 26.2px;
    align-items: center;
}

.more-link {
    color: #0000ee;
    white-space: nowrap;
    letter-spacing: 0.15px;
}

/* actions pane */
.actions {
    flex: 1;
    margin: 0 2px 2px 6px;
    border-left: 2px solid #8a8a8a;
    border-top: 3px solid #7e7e7e;
    background: #fff;
    display: flex;
    flex-direction: column;
}

.actions-head {
    height: 27px;
    flex-shrink: 0;
    background: #f0f0f0;
    border-bottom: 2px solid #a6a6a6;
    display: flex;
    align-items: center;
    padding: 2px 0 0 6px;
    font-weight: 700;
    color: #111;
    letter-spacing: -0.3px;
}

.actions-group {
    height: 32px;
    flex-shrink: 0;
    background: linear-gradient(#b8d0e8, #a6c1dd);
    display: flex;
    align-items: center;
    padding: 0 8px 0 9px;
}

.tri-up {
    margin-left: auto;
    border: 6px solid transparent;
    border-top: 0;
    border-bottom: 6px solid #000;
}

.actions-list {
    margin-top: -1px;
    padding: 0 10px 0 7px;
}

.action {
    height: 30px;
    display: flex;
    align-items: center;
}

.action span {
    letter-spacing: -0.22px;
}

.action svg {
    flex-shrink: 0;
}

.action svg + span {
    margin-left: 11px;
}

.action .help-label {
    margin-left: 14px;
}

.no-icon {
    width: 31px;
    flex-shrink: 0;
}

.tri-right {
    margin-left: auto;
    border: 6px solid transparent;
    border-right: 0;
    border-left: 6px solid #000;
}

.action-sep {
    height: 2px;
    margin-top: -1px;
    border-top: 1px solid #ececec;
}

.statusbar {
    height: 29px;
    flex-shrink: 0;
    background: #f0f0f0;
    border-top: 1px solid #e0e0e0;
    display: flex;
    padding-left: 1568px;
}

.statusbar i {
    width: 1px;
    height: 100%;
    background: #dcdcdc;
    margin-right: 165px;
}

.statusbar i:nth-child(2) {
    margin-right: 103px;
}

/* taskbar */
.taskbar {
    flex: 1;
    background: #021926;
    display: flex;
    color: #fff;
}

.start {
    width: 60px;
    display: flex;
    align-items: center;
    justify-content: center;
}

.search {
    width: 430px;
    background: #f0f0f0;
    border: 1px solid #b6b6b6;
    border-width: 1px 1px 1px 0;
    display: flex;
    align-items: center;
    color: #333;
    padding-left: 15px;
    font-size: 18px;
}

.search span {
    margin-left: 14px;
}

.task-icons {
    display: flex;
}

.task-btn {
    width: 62px;
    display: flex;
    align-items: center;
    justify-content: center;
    border-bottom: 3px solid transparent;
}

.task-btn svg {
    margin-right: 2px;
}

.task-btn.active {
    background: #36464f;
    border-bottom-color: #76b9ed;
}

.task-btn .task-view {
    margin-right: 6px;
}

.task-btn .task-store {
    margin-right: 4px;
}

.task-btn .task-log {
    margin-right: 6px;
}

.tray {
    margin-left: auto;
    display: flex;
    align-items: center;
    padding-right: 31px;
}

.tray-vol {
    margin-left: 14px;
}

.tray-pen {
    margin-left: 13px;
}

.clock {
    display: flex;
    flex-direction: column;
    align-items: center;
    margin-left: 21px;
    font-size: 14.5px;
    line-height: 23px;
}

.tray-note {
    margin-left: 27px;
}

/* save as dialog */
.dialog {
    position: absolute;
    left: 323px;
    top: 228px;
    width: 835px;
    height: 590px;
    background: #fff;
    border: 1px solid #5a5a5a;
    box-shadow: 0 4px 18px rgba(0, 0, 0, 0.35);
    display: flex;
    flex-direction: column;
}

.dlg-title {
    height: 41px;
    flex-shrink: 0;
    display: flex;
    align-items: center;
    padding: 0 15px 4px 10px;
}

.dlg-title span {
    margin-left: 7px;
}

.dlg-close {
    margin-left: auto;
}

.dlg-nav {
    height: 50px;
    flex-shrink: 0;
    display: flex;
    align-items: center;
    padding-left: 16px;
}

.nav-fwd {
    margin-left: 20px;
}

.nav-drop {
    margin-left: 17px;
}

.nav-up {
    margin-left: 15px;
}

.addr,
.refresh,
.dlg-search {
    height: 39px;
    margin-top: -8px;
    border: 1px solid #eaeaea;
    display: flex;
    align-items: center;
}

.addr {
    width: 377px;
    margin-left: 9px;
    padding-left: 6px;
}

.crumb-more {
    margin-left: 7px;
    color: #555;
    width: 19px;
}

.crumb {
    color: #222;
}

.crumb-sep {
    margin: 0 12px 0 11px;
}

.addr-drop {
    margin-left: auto;
    margin-right: 13px;
}

.refresh {
    width: 42px;
    border-left: 0;
    justify-content: center;
}

.dlg-search {
    width: 254px;
    margin-left: 15px;
    padding: 2px 10px 0 10px;
    color: #6d6d6d;
    justify-content: space-between;
}

.dlg-cmd {
    height: 38px;
    flex-shrink: 0;
    background: #f5f6f7;
    border-bottom: 1px solid #eceef0;
    display: flex;
    align-items: center;
    padding: 0 19px 0 22px;
    color: #3e5470;
    white-space: nowrap;
}

.caret {
    border: 5px solid transparent;
    border-bottom: 0;
    border-top: 5px solid #2e3f57;
    margin-left: 7px;
}

.cmd-new {
    margin-left: 40px;
}

.view-icon {
    margin-left: auto;
}

.view-caret {
    margin-left: 11px;
}

.cmd-help {
    width: 20px;
    height: 20px;
    margin-left: 38px;
    border-radius: 50%;
    background: #0063b1;
    color: #fff;
    font-weight: 700;
    font-size: 14px;
    line-height: 20px;
    text-align: center;
}

.dlg-body {
    height: 313px;
    flex-shrink: 0;
    display: flex;
}

.dlg-side {
    width: 199px;
    flex-shrink: 0;
    display: flex;
    border-right: 5px solid #fff;
}

.side-list {
    width: 174px;
    padding-top: 20px;
}

.side-item {
    height: 30px;
    display: flex;
    align-items: center;
    padding: 0 3px 0 40px;
    color: #222;
}

.side-item svg:first-child {
    width: 20px;
    flex-shrink: 0;
}

.side-item span {
    margin-left: 5px;
}

.side-item.top {
    padding-left: 30px;
}

.onedrive,
.this-pc {
    margin-top: 10px;
}

.this-pc {
    background: #d9d9d9;
}

.pin {
    width: 14px;
    height: 14px;
    margin-left: auto;
}

.side-scroll {
    width: 20px;
    background: #f0f0f0;
    display: flex;
    flex-direction: column;
    align-items: center;
    padding-top: 6px;
}

.side-thumb {
    width: 20px;
    height: 239px;
    margin-top: 8px;
    background: #cdcdcd;
}

.side-scroll svg:last-child {
    margin-top: auto;
    margin-bottom: 8px;
}

.dlg-files {
    flex: 1;
    display: flex;
    flex-direction: column;
    position: relative;
    min-width: 0;
}

.files-head {
    height: 34px;
    flex-shrink: 0;
    display: grid;
    grid-template-columns: 339px 180px 1fr;
    align-items: center;
    color: #4c607a;
}

.files-head span {
    height: 100%;
    display: flex;
    align-items: center;
    padding: 0 0 2px 21px;
    border-right: 1px solid #f0f0f0;
}

.files-head .col-date {
    padding-left: 8px;
}

.files-head .col-type {
    padding-left: 8px;
    border-right: 0;
}

.sort-mark {
    position: absolute;
    left: 174px;
    top: 1px;
}

.files-empty {
    text-align: center;
    color: #6d6d6d;
    margin-top: 18px;
    letter-spacing: -0.1px;
}

.files-scroll {
    margin-top: auto;
    margin-bottom: 2px;
    height: 20px;
    display: flex;
    align-items: center;
    background: #f0f0f0;
    padding: 0 7px;
}

.files-thumb {
    width: 478px;
    height: 20px;
    margin-left: 8px;
    background: #cdcdcd;
}

.files-scroll svg:last-child {
    margin-left: auto;
}

.dlg-form {
    flex: 1;
    background: #f0f0f0;
    padding: 13px 6px 0 0;
    position: relative;
}

.form-row {
    display: flex;
    align-items: center;
    height: 30px;
    margin-bottom: 3px;
}

.form-row label {
    width: 155px;
    text-align: right;
    padding-right: 4px;
    flex-shrink: 0;
}

.combo {
    flex: 1;
    height: 30px;
    background: #fff;
    border: 1px solid #a9a9a9;
    display: flex;
    align-items: center;
    justify-content: space-between;
    padding: 0 6px;
}

.combo span {
    letter-spacing: -0.25px;
}

.combo-grey {
    background: #e1e1e1;
    padding-left: 4px;
}

.dlg-foot {
    display: flex;
    align-items: center;
    margin-top: 24px;
    padding-left: 16px;
}

.hide-chev {
    margin-top: 6px;
}

.hide-folders {
    margin-left: 10px;
    margin-top: 10px;
}

.dlg-foot button {
    width: 109px;
    height: 31px;
    font: inherit;
    color: #1c1c1c;
}

.btn-save {
    margin-left: auto;
    background: #e5f1fb;
    border: 1px solid #7eb4ea;
    border-bottom-width: 2px;
}

.btn-cancel {
    margin-left: 16px;
    margin-right: 16px;
    background: #e1e1e1;
    border: 1px solid #adadad;
}

.grip {
    position: absolute;
    right: 3px;
    bottom: 2px;
}
```
